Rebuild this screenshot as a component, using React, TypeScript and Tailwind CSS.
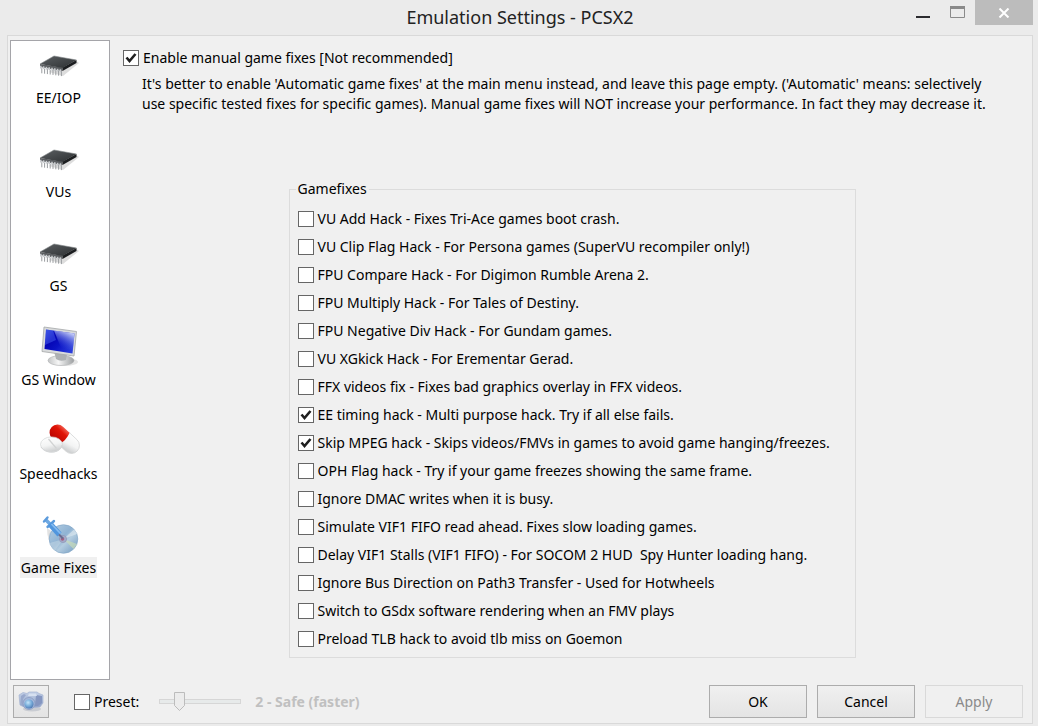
import { useState } from "react";
import type { ReactNode } from "react";

function ChipIcon() {
  const pins = [0, 1, 2, 3, 4, 5, 6, 7];
  return (
    <svg viewBox="0 0 44 44" className="size-11" aria-hidden="true">
      <defs>
        <linearGradient id="chipTop" x1="0" y1="0" x2="1" y2="1">
          <stop offset="0" stopColor="#5c6063" />
          <stop offset="1" stopColor="#2c2f31" />
        </linearGradient>
      </defs>
      <path d="M12 29 26 33 42 20 38 17 20 24Z" fill="#cfcfcf" opacity=".7" />
      <path d="M3 21v3l22.500 4V24.500Z" fill="#5a5d60" />
      <path d="M25.500 28V24.500L39.500 17v3Z" fill="#1c1e20" />
      <path d="M3 21 17 13 39.500 17 25.500 25Z" fill="url(#chipTop)" />
      <path d="M3 21 17 13 39.500 17" fill="none" stroke="#85898c" strokeWidth=".6" />
      {pins.map((i) => (
        <g key={i}>
          <path d={`M${3.8 + i * 2.8} ${22.8 + i * 0.5}v2.8`} stroke="#c9cccf" strokeWidth="1.600" />
          <path d={`M${4.8 + i * 2.8} ${25.3 + i * 0.4}v5`} stroke="#9a9da0" strokeWidth="1" />
        </g>
      ))}
    </svg>
  );
}

function MonitorIcon() {
  return (
    <svg viewBox="0 0 44 44" className="size-11" aria-hidden="true">
      <defs>
        <linearGradient id="screen" x1="0" y1="0" x2="1" y2=".8">
          <stop offset="0" stopColor="#2a3fd8" />
          <stop offset=".35" stopColor="#0505b4" />
          <stop offset=".6" stopColor="#0a12c4" />
          <stop offset="1" stopColor="#2c3fdc" />
        </linearGradient>
        <linearGradient id="glare" x1=".3" y1="1" x2=".8" y2="0">
          <stop offset=".1" stopColor="#3a52e0" stopOpacity="0" />
          <stop offset="1" stopColor="#eaf0ff" />
        </linearGradient>
        <linearGradient id="stand" x1="0" y1="0" x2="1" y2="0">
          <stop offset="0" stopColor="#c3c5c6" />
          <stop offset=".4" stopColor="#f6f6f6" />
          <stop offset="1" stopColor="#9c9fa1" />
        </linearGradient>
      </defs>
      <ellipse cx="28" cy="37" rx="14" ry="4" fill="#d4d4d4" opacity=".6" />
      <ellipse cx="25" cy="35.500" rx="13" ry="5" fill="url(#stand)" stroke="#b0b2b3" strokeWidth=".6" />
      <path d="M18 26 31 29 30 35Q24 37 20 34Z" fill="#aeb1b3" />
      <path d="M8 2 40.500 6.500 38 31 6 26.500Z" fill="#d9dbdc" stroke="#a4a7a8" strokeWidth=".8" />
      <path d="M10 4.500 38.500 8.500 36.500 28.500 8.500 24Z" fill="url(#screen)" />
      <path d="M18 5.600 38.500 8.500 37 25 25 23Z" fill="url(#glare)" />
      <path d="M10 4.500 17 5.500 20 15 9 20Z" fill="#5a78ff" opacity=".4" />
    </svg>
  );
}

function PillsIcon() {
  return (
    <svg viewBox="0 0 44 44" className="size-11" aria-hidden="true">
      <defs>
        <linearGradient id="redCap" x1="0" y1="0" x2="0" y2="1">
          <stop offset="0" stopColor="#f0594a" />
          <stop offset=".3" stopColor="#e01405" />
          <stop offset="1" stopColor="#b90400" />
        </linearGradient>
        <linearGradient id="whiteCap" x1="0" y1="0" x2=".3" y2="1">
          <stop offset="0" stopColor="#ffffff" />
          <stop offset=".6" stopColor="#f3f4f4" />
          <stop offset="1" stopColor="#cfd1d2" />
        </linearGradient>
      </defs>
      <g transform="rotate(43 28.500 20)">
        <path d="M28 12h10a8 8 0 0 1 0 16h-10Z" fill="url(#whiteCap)" stroke="#d0d2d2" strokeWidth=".7" />
        <path d="M28 12h-9a8 8 0 0 0 0 16h9Q31 20 28 12Z" fill="url(#redCap)" />
      </g>
      <ellipse cx="15.500" cy="25.500" rx="11" ry="7.600" fill="url(#whiteCap)" stroke="#d3d5d6" strokeWidth=".7" />
      <path d="M5 28Q9 34 18 33Q25 31.500 26 26" fill="none" stroke="#d4d6d7" strokeWidth="1" />
      <path d="M12.500 20 20.500 29.500" stroke="#d1d3d3" strokeWidth="1.200" />
    </svg>
  );
}

function DiscIcon() {
  return (
    <svg viewBox="0 0 44 44" className="size-11" aria-hidden="true">
      <defs>
        <linearGradient id="disc" x1="0" y1="0" x2="1" y2="1">
          <stop offset="0" stopColor="#b7cfe4" />
          <stop offset=".45" stopColor="#8fb3d3" />
          <stop offset=".6" stopColor="#b4cde0" />
          <stop offset="1" stopColor="#6c96bd" />
        </linearGradient>
      </defs>
      <path d="M10 15Q10 28 16 34L17 20Z" fill="#e2e2e2" />
      <circle cx="26.500" cy="26" r="14.300" fill="url(#disc)" stroke="#7ea3c4" strokeWidth=".6" />
      <path d="M26.500 26 37 16.500Q39 18.500 40 21Z" fill="#d8e5ee" opacity=".7" />
      <path d="M26.500 26 40 31Q38.500 33.500 36.500 36Z" fill="#c8dcb8" opacity=".7" />
      <path d="M26.500 26 12.700 30Q14 34.500 18 37.500Z" fill="#bfd3e3" opacity=".6" />
      <circle cx="26" cy="26" r="3.600" fill="#a3abc9" stroke="#8d8fb0" strokeWidth=".6" />
      <circle cx="25.500" cy="26" r="1.800" fill="#a66283" />
      <path d="M8.500 6.500 13.500 11.500" stroke="#6fa9e2" strokeWidth="3.600" />
      <path d="M7 8.500 10.500 4.500M10.500 14 17 8" stroke="#5c9bdc" strokeWidth="2.400" strokeLinecap="round" />
      <path d="M13 11 22.500 21.500" stroke="#5096de" strokeWidth="5.600" />
      <path d="M14.500 11 23.500 20.500" stroke="#86bbef" strokeWidth="1.800" />
      <path d="M22 21.500 26 25.500" stroke="#6a6d90" strokeWidth="2" />
    </svg>
  );
}

function CameraIcon() {
  return (
    <svg viewBox="0 0 26 22" className="h-[22px] w-[26px]" aria-hidden="true">
      <defs>
        <linearGradient id="camBody" x1="0" y1="0" x2="0" y2="1">
          <stop offset="0" stopColor="#c3d0e6" />
          <stop offset="1" stopColor="#8c9fc6" />
        </linearGradient>
        <radialGradient id="camLens" cx=".4" cy=".35" r=".7">
          <stop offset="0" stopColor="#c4e4f8" />
          <stop offset=".5" stopColor="#7cb0dc" />
          <stop offset="1" stopColor="#4a76b0" />
        </radialGradient>
      </defs>
      <ellipse cx="14" cy="18" rx="9" ry="2.500" fill="#c9ccd2" />
      <path d="M1 4 5 1.500 9 2.500 11 1H19L21 2.500 25 4V12L22 16 8 17 2 14Z" fill="url(#camBody)" stroke="#a6b5d2" strokeWidth=".7" />
      <path d="M18 4 24 5V12L20 15H17Z" fill="#8596c0" />
      <path d="M3 5 6 3 8 4 5 8V13L3 12Z" fill="#98a8cc" />
      <path d="M11 2.500H18L19 5H10Z" fill="#d6e0f0" />
      <circle cx="11" cy="12.500" r="6" fill="#a5b8da" stroke="#8496be" strokeWidth=".7" />
      <circle cx="11" cy="13" r="4.600" fill="url(#camLens)" />
    </svg>
  );
}

const pages: { label: string; icon: ReactNode }[] = [
  { label: "EE/IOP", icon: <ChipIcon /> },
  { label: "VUs", icon: <ChipIcon /> },
  { label: "GS", icon: <ChipIcon /> },
  { label: "GS Window", icon: <MonitorIcon /> },
  { label: "Speedhacks", icon: <PillsIcon /> },
  { label: "Game Fixes", icon: <DiscIcon /> },
];

const fixes: { label: string; on?: boolean }[] = [
  { label: "VU Add Hack - Fixes Tri-Ace games boot crash." },
  { label: "VU Clip Flag Hack - For Persona games (SuperVU recompiler only!)" },
  { label: "FPU Compare Hack - For Digimon Rumble Arena 2." },
  { label: "FPU Multiply Hack - For Tales of Destiny." },
  { label: "FPU Negative Div Hack - For Gundam games." },
  { label: "VU XGkick Hack - For Erementar Gerad." },
  { label: "FFX videos fix - Fixes bad graphics overlay in FFX videos." },
  { label: "EE timing hack - Multi purpose hack. Try if all else fails.", on: true },
  { label: "Skip MPEG hack - Skips videos/FMVs in games to avoid game hanging/freezes.", on: true },
  { label: "OPH Flag hack - Try if your game freezes showing the same frame." },
  { label: "Ignore DMAC writes when it is busy." },
  { label: "Simulate VIF1 FIFO read ahead. Fixes slow loading games." },
  { label: "Delay VIF1 Stalls (VIF1 FIFO) - For SOCOM 2 HUD \u00a0Spy Hunter loading hang." },
  { label: "Ignore Bus Direction on Path3 Transfer - Used for Hotwheels" },
  { label: "Switch to GSdx software rendering when an FMV plays" },
  { label: "Preload TLB hack to avoid tlb miss on Goemon" },
];

function Check({ label, on = false }: { label: string; on?: boolean }) {
  return (
    <label className="flex w-fit items-center gap-1 leading-5">
      <span className="grid size-4 shrink-0">
        <input
          type="checkbox"
          defaultChecked={on}
          className="peer col-start-1 row-start-1 size-4 appearance-none border border-[#666] bg-white"
        />
        <svg
          viewBox="0 0 16 16"
          className="pointer-events-none invisible col-start-1 row-start-1 size-4 peer-checked:visible"
          aria-hidden="true"
        >
          <path d="M3.500 7.500 6.500 11 12.500 4" fill="none" stroke="#1f1f1f" strokeWidth="2.600" />
        </svg>
      </span>
      {label}
    </label>
  );
}

const pushButton =
  "h-[33px] w-[98px] border border-[#acacac] bg-linear-to-b from-[#f0f0f0] to-[#e4e4e4] disabled:border-[#d9d9d9] disabled:bg-none disabled:text-[#8a8a8a]";

export default function App() {
  const [page, setPage] = useState("Game Fixes");

  return (
    <div className="flex min-h-screen flex-col bg-[#ebebeb] pr-[5px] pb-[2px] pl-[7px] font-['Noto_Sans','Open_Sans',sans-serif] text-[14px] text-black">
      <header className="grid h-[35px] grid-cols-[1fr_auto_1fr] items-start">
        <span />
        <h1 className="pt-[5px] text-[18px] leading-6 text-[#222]">Emulation Settings - PCSX2</h1>
        <div className="flex justify-end">
          <button type="button" aria-label="Minimize" className="grid h-[25px] w-8 place-items-center">
            <svg viewBox="0 0 14 14" className="size-3.5" aria-hidden="true">
              <path d="M0 11h14" stroke="#2b2b2f" strokeWidth="2" />
            </svg>
          </button>
          <button type="button" aria-label="Maximize" className="grid h-[25px] w-9 place-items-center">
            <svg viewBox="0 0 15 13" className="h-[13px] w-[15px]" aria-hidden="true">
              <path d="M.5.5h14v11H.5Z" fill="none" stroke="#8a8a8a" />
              <path d="M0 1.500h15" stroke="#8a8a8a" strokeWidth="3" />
            </svg>
          </button>
          <button type="button" aria-label="Close" className="grid h-[25px] w-[58px] place-items-center bg-[#bcbcbc]">
            <svg viewBox="0 0 12 10" className="h-[10px] w-3" aria-hidden="true">
              <path d="M1.500 .5 10.500 9.500M10.500 .5 1.500 9.500" stroke="#fff" strokeWidth="2" />
            </svg>
          </button>
        </div>
      </header>

      <div className="flex flex-1 flex-col border border-[#d9d9d9] bg-[#f0f0f0] pt-1">
        <div className="flex flex-1">
          <nav className="ml-[2px] flex w-[100px] shrink-0 flex-col items-center gap-[29px] border border-[#a5a5a9] bg-white pt-[2px] pr-[3px]">
            {pages.map((p) => (
              <button
                key={p.label}
                type="button"
                onClick={() => setPage(p.label)}
                className="flex flex-col items-center whitespace-nowrap"
              >
                {p.icon}
                <span className={`h-[21px] px-px leading-[21px] ${page === p.label ? "bg-[#f0f0f0]" : ""}`}>
                  {p.label}
                </span>
              </button>
            ))}
          </nav>

          <main className="flex-1 pt-2">
            <div className="pl-[13px]">
              <Check label="Enable manual game fixes [Not recommended]" on />
              <p className="mt-[6px] pl-[19px] leading-5">
                It's better to enable 'Automatic game fixes' at the main menu instead, and leave this page empty.
                ('Automatic' means: selectively
                <br />
                use specific tested fixes for specific games). Manual game fixes will NOT increase your performance. In
                fact they may decrease it.
              </p>
            </div>
            <div className="flex justify-center pt-[65px] pl-[2px]">
              <fieldset className="flex w-[567px] flex-col gap-2 border border-[#dcdcdc] px-2 pt-[10px] pb-2">
                <legend className="-ml-[2px] px-[2px] leading-5">Gamefixes</legend>
                {fixes.map((f) => (
                  <Check key={f.label} {...f} />
                ))}
              </fieldset>
            </div>
          </main>
        </div>

        <footer className="flex items-center pt-[5px] pr-[9px] pb-[5px] pl-[5px]">
          <button
            type="button"
            aria-label="Take screenshot"
            className="grid h-[33px] w-9 place-items-center border border-[#acacac] bg-linear-to-b from-[#f0f0f0] to-[#e4e4e4]"
          >
            <CameraIcon />
          </button>
          <div className="ml-[25px]">
            <Check label="Preset:" />
          </div>
          <div className="ml-5 grid w-[82px] items-center">
            <div className="col-start-1 row-start-1 h-[5px] border border-[#d6d6d6] bg-[#e7eaea]" />
            <svg viewBox="0 0 82 20" className="col-start-1 row-start-1 h-5 w-[82px]" aria-hidden="true">
              <path d="M15.500 .5h10v13l-5 5-5-5Z" fill="#ececec" stroke="#bcbcbc" />
            </svg>
            <input
              type="range"
              min={0}
              max={5}
              defaultValue={1}
              disabled
              aria-label="Preset level"
              className="col-start-1 row-start-1 m-0 h-5 w-full opacity-0"
            />
          </div>
          <span className="ml-[14px] font-bold text-[#c0c0c0]">2 - Safe (faster)</span>
          <div className="ml-auto flex gap-[10px]">
            <button type="button" className={pushButton}>
              OK
            </button>
            <button type="button" className={pushButton}>
              Cancel
            </button>
            <button type="button" className={pushButton} disabled>
              Apply
            </button>
          </div>
        </footer>
      </div>
    </div>
  );
}
